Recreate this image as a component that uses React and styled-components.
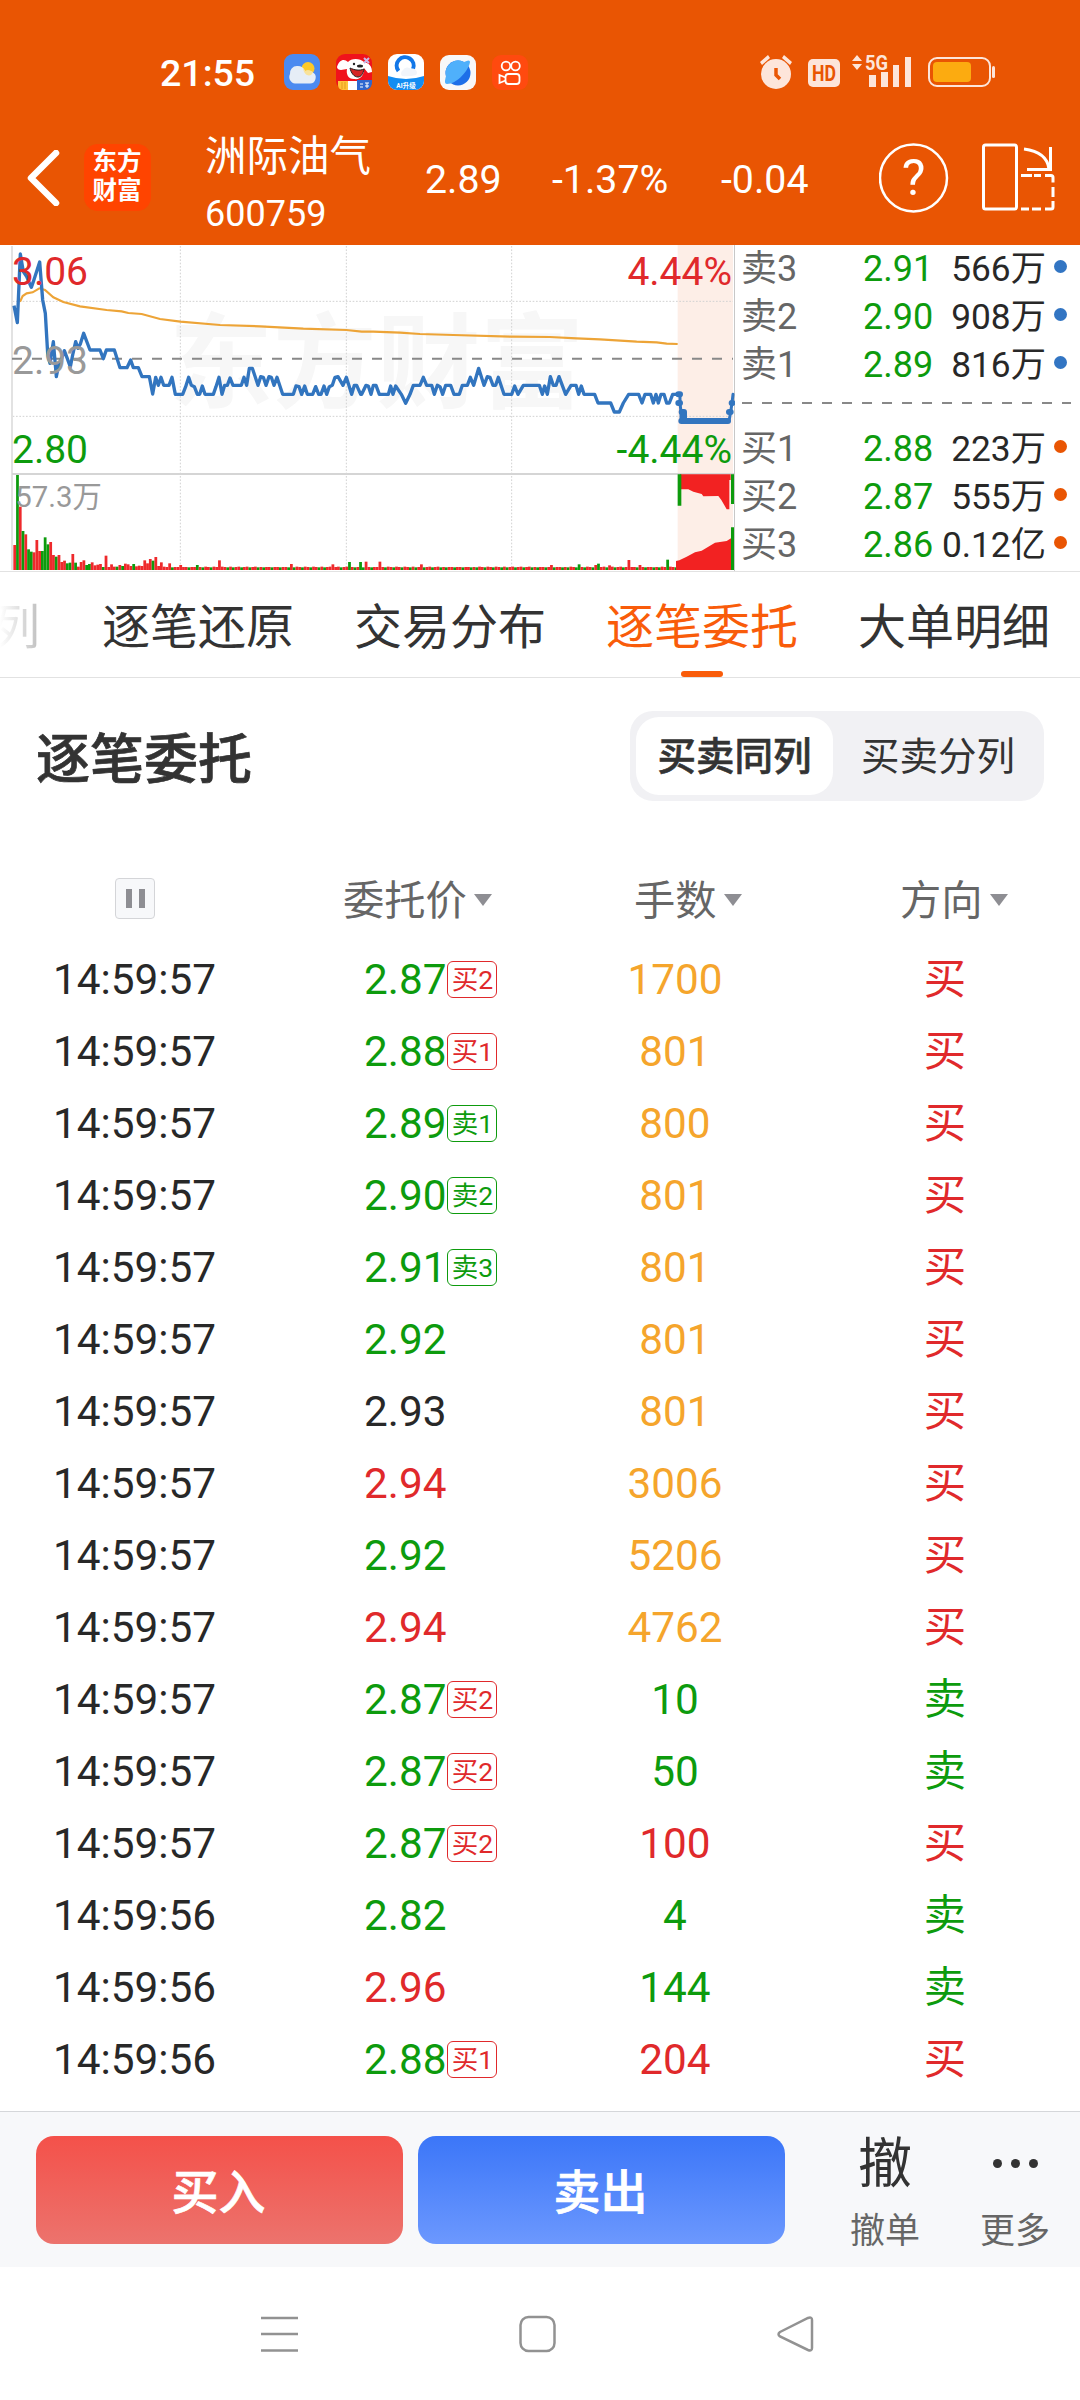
import styled, { createGlobalStyle } from "styled-components";

const GlobalStyle = createGlobalStyle`
  * {
    box-sizing: border-box;
  }

  body {
    margin: 0;
    background-color: #fff;
    font-family: Roboto, "Noto Sans CJK SC", sans-serif;
    color: #282828;
  }
`;

const RED = "#e0292b";
const GREEN = "#0d9b0d";
const ORANGE = "#f5a52c";
const BLACK = "#282828";

const Page = styled.div`
  width: 1080px;
  height: 2400px;
  display: flex;
  flex-direction: column;
  overflow: hidden;
  background-color: #fff;
`;

const Header = styled.header`
  height: 245px;
  background-color: #e95503;
  color: #fff;
`;

const StatusBar = styled.div`
  display: flex;
  align-items: center;
  height: 90px;
  padding: 54px 85px 0 160px;
`;

const Clock = styled.span`
  width: 124px;
  padding-top: 1px;
  font-size: 37.5px;
  font-weight: 500;
  line-height: 36px;
`;

const AppIcons = styled.div`
  display: flex;
  gap: 16px;
  margin-right: auto;
`;

const TitleBar = styled.div`
  display: flex;
  align-items: center;
  height: 155px;
  padding: 20px 24px 0 26px;
`;

const Logo = styled.div`
  width: 67px;
  height: 67px;
  margin-left: 23px;
  padding: 3px 1px 0 0;
  border-radius: 14px;
  background-color: #ff4400;
  font-size: 24.5px;
  font-weight: 700;
  line-height: 29px;
  text-align: center;
`;

const StockName = styled.div`
  width: 220px;
  margin-left: 54px;
  padding-top: 16px;
`;

const Name = styled.div`
  font-size: 41.5px;
  line-height: 48px;
`;

const Code = styled.div`
  margin-top: 9px;
  font-size: 36px;
  line-height: 48px;
`;

const Quote = styled.span`
  width: ${(props) => props.$width}px;
  padding-top: 4px;
  font-size: 39.3px;
  line-height: 46px;
  white-space: nowrap;
`;

const Market = styled.section`
  display: flex;
  height: 327px;
  border-bottom: 1px solid #e2e2e2;
`;

const Chart = styled.svg`
  display: block;
  flex: none;
`;

const OrderBook = styled.div`
  flex: 1;
  padding: 0 13px 0 6px;
`;

const BookRow = styled.div`
  display: grid;
  grid-template-columns: 122px 1fr 22px;
  align-items: center;
  height: 48px;
  font-size: 36px;
  line-height: 48px;
  color: #666;
`;

const BookNumbers = styled.div`
  display: flex;
  justify-content: space-between;
  margin-right: -1px;
  color: ${BLACK};
`;

const BookPrice = styled.span`
  color: ${GREEN};
`;

const BookVolume = styled.span`
  font-size: 35.3px;
`;

const Dot = styled.i`
  width: 13px;
  height: 13px;
  margin: -6px 0 0 9px;
  border-radius: 50%;
  background-color: ${(props) => props.$color};
`;

const BookDivider = styled.div`
  height: 2px;
  margin: 13px -4px 21px 1px;
  background: repeating-linear-gradient(90deg, #888 0 10px, transparent 10px 20px);
`;

const Tabs = styled.nav`
  display: flex;
  gap: 60px;
  height: 106px;
  border-bottom: 1px solid #e2e2e2;
  overflow: hidden;
`;

const Tab = styled.a`
  display: flex;
  flex: none;
  flex-direction: column;
  align-items: center;
  justify-content: space-between;
  height: 105px;
  padding-top: 21px;
  font-size: 48px;
  line-height: 70px;
  color: ${(props) => (props.$active ? "#f95c0a" : "#333")};

  &::after {
    content: "";
    width: 42px;
    height: 6px;
    border-radius: 3px;
    background-color: ${(props) => (props.$active ? "#f95c0a" : "transparent")};
  }
`;

const CutTab = styled(Tab)`
  width: 42px;
  align-items: flex-end;
  padding-right: 2px;
  color: transparent;
  background: linear-gradient(90deg, #fff, #bbb) text;
`;

const SectionHead = styled.div`
  display: flex;
  align-items: center;
  justify-content: space-between;
  height: 156px;
  padding: 0 36px;
`;

const SectionTitle = styled.h2`
  margin: 9px 0 0;
  font-size: 54px;
  font-weight: 500;
  -webkit-text-stroke: 0.7px #333;
  line-height: 70px;
  color: #333;
`;

const Switch = styled.div`
  display: flex;
  width: 414px;
  height: 90px;
  padding: 6px;
  border-radius: 23px;
  background-color: #f1f1f4;
`;

const SwitchItem = styled.span`
  display: flex;
  align-items: center;
  justify-content: center;
  width: ${(props) => (props.$active ? 199 : 207)}px;
  padding-left: ${(props) => (props.$active ? 0 : 5)}px;
  border-radius: 23px;
  background-color: ${(props) => (props.$active ? "#fff" : "transparent")};
  font-size: 38.5px;
  font-weight: ${(props) => (props.$active ? 500 : 400)};
  -webkit-text-stroke: ${(props) => (props.$active ? 0.6 : 0)}px #333;
  line-height: 79px;
  color: #333;
`;

const Table = styled.div`
  flex: 1;
  padding-top: 25px;
`;

const HeadRow = styled.div`
  display: grid;
  grid-template-columns: 270px 290px 230px 290px;
  align-items: center;
  height: 85px;
  font-size: 41.3px;
  line-height: 60px;
  color: #666;
`;

const HeadCell = styled.div`
  display: flex;
  align-items: center;
  margin-top: -2px;
  padding-left: ${(props) => props.$left}px;

  &::after {
    content: "";
    margin: -2px 0 0 7px;
    border: 9px solid transparent;
    border-top: 12px solid #8e8e93;
    border-bottom: 0;
  }
`;

const Pause = styled.div`
  display: flex;
  align-items: center;
  justify-content: center;
  gap: 7px;
  width: 40px;
  height: 41px;
  margin: -6px 0 0 115px;
  border: 1px solid #d4d5d8;
  border-radius: 4px;
  background-color: #f7f8fa;

  &::before,
  &::after {
    content: "";
    width: 6px;
    height: 19px;
    background-color: #8e8e93;
  }
`;

const Row = styled.div`
  display: grid;
  grid-template-columns: 364px 196px 230px 310px;
  align-items: center;
  height: 72px;
  font-size: 42.3px;
  line-height: 72px;
`;

const Time = styled.span`
  padding-left: 53px;
`;

const Price = styled.span`
  display: flex;
  align-items: center;
  color: ${(props) => props.$color};
`;

const Level = styled.span`
  width: 50px;
  height: 37px;
  margin: -1px 0 0 1px;
  border: 1px solid;
  border-radius: 6px;
  font-size: 26.5px;
  line-height: 35px;
  text-align: center;
  color: ${(props) => props.$color};
`;

const Cell = styled.span`
  text-align: center;
  color: ${(props) => props.$color};
`;

const TradeBar = styled.footer`
  display: flex;
  height: 156px;
  padding: 24px 0 0 36px;
  border-top: 1px solid #d5d7da;
  background-color: #f7f8fa;
`;

const TradeButton = styled.button`
  width: 367px;
  height: 108px;
  margin-right: 15px;
  padding: 0 2px 3px 0;
  border: 0;
  border-radius: 18px;
  background: ${(props) => props.$fill};
  color: #fff;
  font-family: inherit;
  font-size: 47px;
  font-weight: 500;
  -webkit-text-stroke: 0.7px #fff;
`;

const Action = styled.div`
  display: flex;
  flex-direction: column;
  align-items: center;
  width: ${(props) => props.$width}px;
  font-size: 35px;
  line-height: 50px;
  color: #666;
`;

const ActionMark = styled.span`
  display: flex;
  align-items: center;
  justify-content: center;
  gap: 9px;
  height: 68px;
  margin: ${(props) => (props.$dots ? "-7px 0 10px" : "-5px 0 8px")};
  font-size: 54px;
  color: #333;
`;

const MoreDot = styled.i`
  width: 9px;
  height: 9px;
  border-radius: 50%;
  background-color: #333;
`;

const SystemNav = styled.div`
  display: flex;
  justify-content: space-between;
  height: 133px;
  padding: 48px 266px 0 261px;
`;

const asks = [
  ["卖3", "2.91", "566万"],
  ["卖2", "2.90", "908万"],
  ["卖1", "2.89", "816万"],
];

const bids = [
  ["买1", "2.88", "223万"],
  ["买2", "2.87", "555万"],
  ["买3", "2.86", "0.12亿"],
];

const orders = [
  ["14:59:57", "2.87", "买2", "1700", ORANGE, "买"],
  ["14:59:57", "2.88", "买1", "801", ORANGE, "买"],
  ["14:59:57", "2.89", "卖1", "800", ORANGE, "买"],
  ["14:59:57", "2.90", "卖2", "801", ORANGE, "买"],
  ["14:59:57", "2.91", "卖3", "801", ORANGE, "买"],
  ["14:59:57", "2.92", "", "801", ORANGE, "买"],
  ["14:59:57", "2.93", "", "801", ORANGE, "买"],
  ["14:59:57", "2.94", "", "3006", ORANGE, "买"],
  ["14:59:57", "2.92", "", "5206", ORANGE, "买"],
  ["14:59:57", "2.94", "", "4762", ORANGE, "买"],
  ["14:59:57", "2.87", "买2", "10", GREEN, "卖"],
  ["14:59:57", "2.87", "买2", "50", GREEN, "卖"],
  ["14:59:57", "2.87", "买2", "100", RED, "买"],
  ["14:59:56", "2.82", "", "4", GREEN, "卖"],
  ["14:59:56", "2.96", "", "144", GREEN, "卖"],
  ["14:59:56", "2.88", "买1", "204", RED, "买"],
];

const priceColor = (price) => {
  if (Number(price) === 2.93) return BLACK;
  return Number(price) > 2.93 ? RED : GREEN;
};

const sideColor = (text) => (text.startsWith("买") ? RED : GREEN);

// The chart is drawn at three units per pixel.
const pricePoints =
  "42,197 52,248 61,42 70,95 80,110 94,142 100,125 119,66 128,180 136,220 143,340 150,370 160,305 169,410 176,375 185,356 193,332 202,356 211,381 218,345 227,305 234,325 241,312 251,280 270,330 300,330 310,356 319,330 343,330 360,383 381,383 392,360 400,383 415,383 426,410 448,410 458,462 467,412 475,436 483,412 491,436 507,436 516,412 526,463 548,463 557,440 566,412 574,436 583,440 592,463 599,463 607,438 615,463 640,463 648,440 657,412 666,463 674,436 682,436 690,414 699,436 724,436 732,412 740,436 748,385 757,385 766,412 774,436 782,410 790,412 798,436 807,410 814,412 822,436 831,412 848,463 880,463 888,438 897,440 905,463 914,438 922,463 938,463 947,440 956,463 963,463 972,438 980,463 988,440 997,436 1005,412 1014,410 1029,436 1039,412 1055,463 1063,436 1070,436 1082,463 1085,463 1098,436 1105,438 1113,463 1120,436 1128,436 1138,463 1165,463 1172,438 1179,463 1187,438 1204,463 1217,490 1230,463 1240,436 1260,436 1270,412 1280,436 1295,436 1303,463 1312,436 1320,440 1328,463 1337,436 1352,436 1362,463 1378,463 1387,436 1402,436 1411,412 1421,436 1436,385 1452,436 1462,410 1470,412 1479,436 1487,436 1495,412 1512,463 1535,463 1544,438 1554,463 1570,436 1618,436 1627,463 1634,438 1642,463 1651,410 1660,436 1668,436 1677,410 1697,463 1713,436 1728,436 1736,463 1744,438 1752,463 1784,463 1794,489 1832,489 1843,516 1858,516 1870,489 1886,463 1916,463 1926,489 1935,463 1952,463 1960,489 1968,463 1975,489 1983,463 1992,463 2000,489 2008,489 2018,463 2038,463";

const averagePoints =
  "60,185 68,168 80,160 98,157 118,145 135,150 160,172 190,186 240,199 320,210 365,214 385,219 425,222 480,237 541,245 660,255 780,259 910,266 1039,270 1085,275 1120,275 1200,278 1260,282 1360,285 1535,290 1650,291 1730,295 1800,298 1910,305 1970,307 2000,311 2033,312";

const openingVolume =
  "r75 g285 r190 g117 r107 g62 g55 r53 r90 r57 g57 g98 g77 r84 r45 g40 r45 r24 r28 g20 g22 r48 g22 r10 r24 r29 g15 g18 r23 r14 r16 r18 g9 r43 r9 r17 r10 g10 r15 g12 r19 r17 r12 g18 r11 r13 r12 r29 r20 r33 g28 r39 r12 r23 r10 r9 r20".split(
    " "
  );

const spikes = {
  60: "r15",
  66: "g15",
  74: "r29",
  100: "r18",
  115: "r17",
  121: "g24",
  125: "g24",
  127: "r25",
  132: "r25",
  147: "r17",
  194: "r15",
  204: "g17",
  210: "r15",
  211: "g19",
  215: "r14",
  222: "r30",
  226: "r15",
  236: "g31",
};

const volumes = Array.from({ length: 240 }, (_, i) => {
  const quiet = (i * 7) % 11 < 4 ? "g8" : i % 3 ? "r9" : "r10";
  const value = openingVolume[i] || spikes[i] || quiet;
  return { up: value[0] === "r", size: Number(value.slice(1)), x: 40 + i * 8.3 };
});

function PriceChart() {
  return (
    <Chart width="735" height="326" viewBox="0 15 2205 978">
      <text x="508" y="480" fontSize="311" fontWeight="700" fill="#f7f7f7">
        东方财富
      </text>
      <rect x="2033" y="15" width="166" height="975" fill="#fdeee7" />
      <g stroke="#d2d2d2" strokeWidth="3" strokeDasharray="5 5">
        <path d="M541 18V990M1039 18V990M1535 18V990M38 184H2199M38 529H2199" />
      </g>
      <path d="M36 18V990" stroke="#e2e2e2" strokeWidth="6" />
      <path d="M36 702H2203" stroke="#d5d5d5" strokeWidth="6" />
      <path d="M2204 15V993" stroke="#c8c8c8" strokeWidth="4" />
      <path d="M36 356H2199" stroke="#888" strokeWidth="6" strokeDasharray="30 30" />
      <polyline points={averagePoints} fill="none" stroke="#eda437" strokeWidth="6.5" />
      <polyline
        points={pricePoints}
        fill="none"
        stroke="#3275bf"
        strokeWidth="10"
        strokeLinejoin="round"
      />
      <g fill="none" stroke="#3275bf" strokeLinecap="round" strokeLinejoin="round">
        <path strokeWidth="9" d="M2040 463V489L2043 516V543M2187 543L2192 516L2196 489L2199 463" />
        <path strokeWidth="18" d="M2035 463H2040M2035 489H2040M2045 516H2052V540M2044 543H2184M2187 516H2192M2195 489H2197" />
      </g>
      {volumes.map((bar) => (
        <rect
          key={bar.x}
          x={bar.x}
          y={990 - bar.size}
          width="8.3"
          height={bar.size}
          fill={bar.up ? "#ee2a2c" : "#0d9b0d"}
        />
      ))}
      <path
        fill="#f22222"
        d="M2040 703H2192V720H2188V808H2180L2174 797L2164 780L2155 768L2110 769L2105 762L2080 755L2065 748H2040ZM2028 990V963L2038 961L2060 950L2085 937L2105 932L2125 920L2145 908L2180 903L2193 895V990Z"
      />
      <path fill="#0d9b0d" d="M2033 703H2044V797H2033ZM2193 703H2202V792H2193ZM2193 862H2202V990H2193Z" />
      <g fontSize="117">
        <text x="36" y="134" fill="#e0292b">3.06</text>
        <text x="36" y="401" fill="#999">2.93</text>
        <text x="36" y="668" fill="#0d9b0d">2.80</text>
        <text x="2196" y="134" textAnchor="end" fill="#e0292b">4.44%</text>
        <text x="2196" y="668" textAnchor="end" fill="#0d9b0d">-4.44%</text>
        <text x="46" y="801" fontSize="88" fill="#999">57.3万</text>
      </g>
    </Chart>
  );
}

function WeatherIcon() {
  return (
    <svg width="36" height="36" viewBox="0 0 36 36">
      <rect width="36" height="36" rx="9" fill="#4b8af0" />
      <circle cx="24" cy="14.500" r="6.500" fill="#ffc928" />
      <path d="M11 29.500a6.500 6.500 0 0 1-5-9.500 7 7 0 0 1 7-8 8 8 0 0 1 8 5 8 8 0 0 1 7 1 6 6 0 0 1-3 11.500Z" fill="#e6edf6" />
      <path d="M19 14a8 8 0 0 1 2 3 8 8 0 0 1 8 1c-2 6-9 4-10-4Z" fill="#f8e29a" />
    </svg>
  );
}

function DogIcon() {
  return (
    <svg width="36" height="36" viewBox="0 0 36 36">
      <rect width="36" height="36" rx="9" fill="#f0121c" />
      <path d="M1 13C3 6 8 4 12 8c3-4 12-4 16 0 5 1 8 4 8 10l-4 1-4-5c0 7-3 12-10 11-6 0-8-5-7-10l-6 1c-2 0-4-1-4-3Z" fill="#fff" />
      <path d="M14 14c4 2 10 3 14 1-1 5-3 8-6 8-4 0-7-4-8-9Z" fill="#d52626" stroke="#222" />
      <ellipse cx="24" cy="12" rx="3" ry="1.500" fill="#222" />
      <circle cx="18" cy="10" r="1.200" fill="#222" />
      <path d="M12 27h10v9H12Z" fill="#fff" />
      <path d="M2 27h10v9H8c-4 0-6-2-6-5Z" fill="#ffc23a" />
      <path d="M6 28v7M9 28v7" stroke="#e79b1c" />
      <path d="M21 26h15v2c0 5-3 8-8 8h-7Z" fill="#2f67cf" />
      <path d="M24 30h3m-3 3h3m2-4h4m-4 3h4m-2-3v5" stroke="#fff" />
      <path d="M28 4l5 5m0-5-5 5" stroke="#c9b8e8" strokeWidth="2" />
    </svg>
  );
}

const TinyLabel = styled.text`
  font-size: 6.5px;
  font-weight: 700;
`;

function BrowserIcon() {
  return (
    <svg width="36" height="36" viewBox="0 0 36 36">
      <rect width="36" height="36" rx="9" fill="#fff" />
      <path d="M0 22q18 6 36 0v5a9 9 0 0 1-9 9H9a9 9 0 0 1-9-9Z" fill="#128df2" />
      <path d="M10.500 17A8.500 8.500 0 1 1 25 15" fill="none" stroke="#1277e8" strokeWidth="4" />
      <path d="M14 22a4 4 0 0 1 1-6 5 5 0 0 1 8-1 4 4 0 0 1 5 6q-6 2-14 1Z" fill="#f1f5fa" />
      <TinyLabel x="18" y="34" textAnchor="middle" fill="#fff">AI升级</TinyLabel>
    </svg>
  );
}

function PlanetIcon() {
  return (
    <svg width="36" height="36" viewBox="0 0 36 36">
      <rect y="1" width="36" height="35" rx="9" fill="#f8f8f8" />
      <circle cx="18" cy="19" r="12.500" fill="#1d6fe8" />
      <path d="M6 22A12.500 12.500 0 0 1 24 8q6-3 6 0c-1 8-13 22-23 22-3 0-2-4-1-8Z" fill="#4fb0fb" />
    </svg>
  );
}

function CameraIcon() {
  return (
    <svg width="36" height="36" viewBox="0 0 36 36">
      <rect y="1" width="36" height="35" rx="9" fill="#ff4a0f" />
      <g fill="none" stroke="#fff" strokeWidth="1.800">
        <circle cx="14" cy="12" r="4.300" />
        <circle cx="23.500" cy="12" r="4.300" />
        <rect x="13.500" y="20" width="14" height="10" rx="3" />
        <path d="M13.500 23.500L7.500 21v8l6-2.500" />
      </g>
    </svg>
  );
}

const BadgeText = styled.text`
  font-size: ${(props) => props.$size}px;
  font-weight: 700;
`;

const StatusSvg = styled.svg`
  margin-top: -4px;
`;

function StatusIcons() {
  return (
    <StatusSvg width="236" height="40" viewBox="0 -4 236 40">
      <g fill="#fde5da">
        <circle cx="17" cy="20" r="15" />
        <path d="M1 8L9 1l2 3-8 7ZM33 8L25 1l-2 3 8 7Z" />
        <rect x="49" y="5" width="32" height="28" rx="5" />
        <path d="M93 7l5-6 5 6ZM93 10h10l-5 6Z" />
        <path d="M110 21h7v12h-7ZM122 18h7v15h-7ZM134 11h6v22h-6ZM146 3h6v30h-6Z" />
        <BadgeText x="106" y="16" $size="20" textLength="23" lengthAdjust="spacingAndGlyphs">5G</BadgeText>
        <rect x="233" y="12" width="3" height="12" rx="1.500" />
      </g>
      <path d="M17 14v7l4 4" fill="none" stroke="#e95503" strokeWidth="3.500" />
      <BadgeText x="53" y="27" $size="22" fill="#e95503" textLength="24" lengthAdjust="spacingAndGlyphs">HD</BadgeText>
      <rect x="170" y="4" width="61" height="28" rx="8" fill="none" stroke="#fde5da" strokeWidth="2" />
      <rect x="174" y="8" width="38" height="20" rx="4" fill="#fcab10" />
    </StatusSvg>
  );
}

const HelpMark = styled.text`
  font-size: 50px;
  font-weight: 400;
`;

function BookLine({ row, color }) {
  const [label, price, volume] = row;
  return (
    <BookRow>
      <span>{label}</span>
      <BookNumbers>
        <BookPrice>{price}</BookPrice>
        <BookVolume>{volume}</BookVolume>
      </BookNumbers>
      <Dot $color={color} />
    </BookRow>
  );
}

function App() {
  return (
    <Page>
      <GlobalStyle />
      <Header>
        <StatusBar>
          <Clock>21:55</Clock>
          <AppIcons>
            <WeatherIcon />
            <DogIcon />
            <BrowserIcon />
            <PlanetIcon />
            <CameraIcon />
          </AppIcons>
          <StatusIcons />
        </StatusBar>
        <TitleBar>
          <svg width="35" height="56" viewBox="0 0 35 56">
            <path d="M30 3L5 28L30 53" fill="none" stroke="#fff" strokeWidth="6.500" strokeLinecap="round" strokeLinejoin="round" />
          </svg>
          <Logo>
            东方
            <br />
            财富
          </Logo>
          <StockName>
            <Name>洲际油气</Name>
            <Code>600759</Code>
          </StockName>
          <Quote $width={127}>2.89</Quote>
          <Quote $width={169}>-1.37%</Quote>
          <Quote $width={158}>-0.04</Quote>
          <svg width="177" height="70" viewBox="0 0 177 70">
            <circle cx="34.500" cy="35" r="33.500" fill="none" stroke="#fff" strokeWidth="2.500" />
            <HelpMark x="34.500" y="52" textAnchor="middle" fill="#fff">?</HelpMark>
            <g fill="none" stroke="#fff" strokeWidth="3">
              <rect x="104.500" y="2" width="33" height="64" rx="2" />
              <path d="M145 6q23 3 25 20M171.500 4v22.500H148" />
              <path d="M142 32.500h11M155 32.500h7M166 32.500h6q2 0 2 2v5M174 44v10M174 58v6q0 2-2 2h-6M162 66h-9M150 66h-8" />
            </g>
          </svg>
        </TitleBar>
      </Header>

      <Market>
        <PriceChart />
        <OrderBook>
          {asks.map((row) => (
            <BookLine key={row[0]} row={row} color="#3275c3" />
          ))}
          <BookDivider />
          {bids.map((row) => (
            <BookLine key={row[0]} row={row} color="#e95503" />
          ))}
        </OrderBook>
      </Market>

      <Tabs>
        <CutTab>列</CutTab>
        <Tab>逐笔还原</Tab>
        <Tab>交易分布</Tab>
        <Tab $active>逐笔委托</Tab>
        <Tab>大单明细</Tab>
      </Tabs>

      <SectionHead>
        <SectionTitle>逐笔委托</SectionTitle>
        <Switch>
          <SwitchItem $active>买卖同列</SwitchItem>
          <SwitchItem>买卖分列</SwitchItem>
        </Switch>
      </SectionHead>

      <Table>
        <HeadRow>
          <Pause />
          <HeadCell $left={73}>委托价</HeadCell>
          <HeadCell $left={74}>手数</HeadCell>
          <HeadCell $left={110}>方向</HeadCell>
        </HeadRow>
        {orders.map(([time, price, level, amount, color, side], i) => (
          <Row key={i}>
            <Time>{time}</Time>
            <Price $color={priceColor(price)}>
              {price}
              {level && <Level $color={sideColor(level)}>{level}</Level>}
            </Price>
            <Cell $color={color}>{amount}</Cell>
            <Cell $color={sideColor(side)}>{side}</Cell>
          </Row>
        ))}
      </Table>

      <TradeBar>
        <TradeButton $fill="linear-gradient(#f4514a, #ec736d)">买入</TradeButton>
        <TradeButton $fill="linear-gradient(#3b76f8, #6c98fe)">卖出</TradeButton>
        <Action $width={170}>
          <ActionMark>撤</ActionMark>
          撤单
        </Action>
        <Action $width={90}>
          <ActionMark $dots>
            <MoreDot />
            <MoreDot />
            <MoreDot />
          </ActionMark>
          更多
        </Action>
      </TradeBar>

      <SystemNav>
        <svg width="37" height="38" viewBox="0 0 37 38" fill="none" stroke="#929292" strokeWidth="2.500">
          <path d="M0 3h37M0 19h37M0 35.500h37" />
        </svg>
        <svg width="37" height="38" viewBox="0 0 37 38" fill="none" stroke="#929292" strokeWidth="2.500">
          <rect x="1.500" y="2" width="34" height="34" rx="8" />
        </svg>
        <svg width="37" height="38" viewBox="0 0 37 38" fill="none" stroke="#929292" strokeWidth="2.500">
          <path d="M3 17L31 3q4-1.500 4 2v28q0 3.500-4 2L3 21.500q-3-2.250 0-4.500Z" />
        </svg>
      </SystemNav>
    </Page>
  );
}

export default App;
